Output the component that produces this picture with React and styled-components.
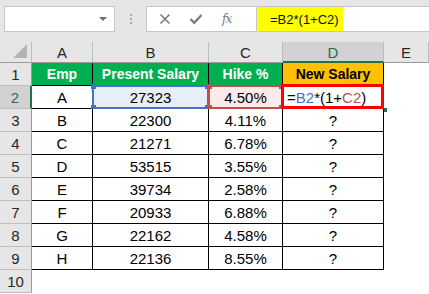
import React from "react";
import styled, { createGlobalStyle } from "styled-components";

const Global = createGlobalStyle`
  html, body { margin: 0; padding: 0; background: #fff; }
  body { font-family: "Liberation Sans", Arial, sans-serif; }
  * { box-sizing: border-box; }
`;

const Page = styled.div`
  width: 429px;
  height: 294px;
  overflow: hidden;
  background: #fff;
  display: flex;
  flex-direction: column;
`;

const Toolbar = styled.div`
  height: 42px;
  flex: none;
  background: #e6e6e6;
  display: flex;
  align-items: flex-start;
  padding: 6px 0 0 4px;
`;

const NameBox = styled.div`
  width: 111px;
  height: 26px;
  background: #fff;
  border: 1px solid #c6c6c6;
  display: flex;
  align-items: center;
  justify-content: flex-end;
  padding-right: 7px;
`;

const Caret = styled.div`
  width: 0;
  height: 0;
  border-left: 4px solid transparent;
  border-right: 4px solid transparent;
  border-top: 4px solid #6e6e6e;
`;

const Grip = styled.div`
  width: 31px;
  height: 26px;
  display: flex;
  flex-direction: column;
  align-items: center;
  justify-content: center;
  gap: 2px;
`;

const GripDot = styled.span`
  width: 2px;
  height: 2px;
  background: #a8a8a8;
`;

const FxButtons = styled.div`
  width: 111px;
  height: 26px;
  background: #fff;
  border: 1px solid #c6c6c6;
  display: flex;
  align-items: center;
  padding-left: 12px;
  gap: 18px;
`;

const Fx = styled.span`
  font-family: "DejaVu Serif", "Liberation Serif", serif;
  font-style: italic;
  font-size: 12px;
  color: #7a7a7a;
  letter-spacing: -1px;
  margin-left: 1px;
`;

const FormulaInput = styled.div`
  flex: 1;
  height: 26px;
  margin-left: 1px;
  background: #fff;
  border-top: 1px solid #c6c6c6;
  border-bottom: 1px solid #c6c6c6;
  display: flex;
  align-items: stretch;
`;

const Highlight = styled.div`
  background: #ffff00;
  width: 85px;
  font-size: 13px;
  color: #111;
  white-space: nowrap;
  display: flex;
  align-items: center;
  padding-left: 12px;
`;

const Grid = styled.div`
  display: grid;
  grid-template-columns: 32px 61px 116px 74px 101px 1fr;
  grid-template-rows: 21px repeat(10, 23px);
`;

const Corner = styled.div`
  background: #e6e6e6;
  border-right: 1px solid #bdbdbd;
  border-bottom: 1px solid #9b9b9b;
  position: relative;
  &::after {
    content: "";
    position: absolute;
    right: 4px;
    bottom: 4px;
    width: 0;
    height: 0;
    border-left: 14px solid transparent;
    border-bottom: 14px solid #b4b4b4;
  }
`;

const ColHead = styled.div`
  background: ${(p) => (p.$sel ? "#d2d2d2" : "#e6e6e6")};
  color: ${(p) => (p.$sel ? "#217346" : "#262626")};
  border-right: 1px solid #bdbdbd;
  border-bottom: ${(p) => (p.$sel ? "2px solid #217346" : "1px solid #9b9b9b")};
  font-size: 15px;
  display: flex;
  align-items: center;
  justify-content: center;
  padding-top: ${(p) => (p.$sel ? "1px" : "0")};
`;

const RowHead = styled.div`
  background: ${(p) => (p.$sel ? "#d2d2d2" : "#e6e6e6")};
  color: ${(p) => (p.$sel ? "#217346" : "#262626")};
  border-right: ${(p) => (p.$sel ? "2px solid #217346" : "1px solid #9b9b9b")};
  border-bottom: 1px solid #bdbdbd;
  font-size: 15px;
  display: flex;
  align-items: center;
  justify-content: center;
`;

const Cell = styled.div`
  position: relative;
  color: ${(p) => p.$fg || "#000"};
  display: flex;
  align-items: center;
  justify-content: ${(p) => (p.$left ? "flex-start" : "center")};
  padding-left: ${(p) => (p.$left ? "4px" : "0")};
  border-right: 1px solid #000;
  border-bottom: 1px solid #000;
  background: ${(p) => p.$bg || "#fff"};
  font-weight: ${(p) => (p.$bold ? 700 : 400)};
  font-size: ${(p) => (p.$bold ? "14px" : "15px")};
`;

const Empty = styled.div`
  background: #fff;
`;

const RefBox = styled.div`
  position: absolute;
  left: -1px;
  top: -1px;
  right: -1px;
  bottom: -1px;
  border: 2px solid ${(p) => p.$color};
  pointer-events: none;
`;

const Handle = styled.span`
  position: absolute;
  width: 5px;
  height: 5px;
  background: ${(p) => p.$color};
  ${(p) => (p.$top ? "top: -3px;" : "bottom: -3px;")}
  ${(p) => (p.$leftSide ? "left: -3px;" : "right: -3px;")}
`;

const ActiveBox = styled.div`
  position: absolute;
  left: -2px;
  top: -2px;
  right: -1px;
  bottom: -1px;
  border: 3px solid #ff0000;
  pointer-events: none;
`;

const FillHandle = styled.span`
  position: absolute;
  right: -4px;
  bottom: -4px;
  width: 4px;
  height: 4px;
  background: #217346;
`;

const Ref = styled.span`
  color: ${(p) => p.$color};
`;

const FormulaText = styled.span`
  font-size: 15px;
  white-space: nowrap;
`;

function RefFrame({ color }) {
  return (
    <RefBox $color={color}>
      <Handle $color={color} $top $leftSide />
      <Handle $color={color} $top />
      <Handle $color={color} $leftSide />
      <Handle $color={color} />
    </RefBox>
  );
}

const rows = [
  ["A", "27323", "4.50%"],
  ["B", "22300", "4.11%"],
  ["C", "21271", "6.78%"],
  ["D", "53515", "3.55%"],
  ["E", "39734", "2.58%"],
  ["F", "20933", "6.88%"],
  ["G", "22162", "4.58%"],
  ["H", "22136", "8.55%"],
];

const BLUE = "#4472c4";
const RED = "#c0504d";

export default function App() {
  return (
    <>
      <Global />
      <Page>
        <Toolbar>
          <NameBox>
            <Caret />
          </NameBox>
          <Grip>
            <GripDot />
            <GripDot />
            <GripDot />
          </Grip>
          <FxButtons>
            <svg width="12" height="12" viewBox="0 0 12 12">
              <path d="M1.5 1.5 L10.5 10.5 M10.5 1.5 L1.5 10.5" stroke="#7a7a7a" strokeWidth="1.5" fill="none" />
            </svg>
            <svg width="14" height="12" viewBox="0 0 14 12">
              <path d="M1.5 6 L5.2 9.8 L12.5 2" stroke="#7a7a7a" strokeWidth="2.2" fill="none" />
            </svg>
            <Fx>fx</Fx>
          </FxButtons>
          <FormulaInput>
            <Highlight>=B2*(1+C2)</Highlight>
          </FormulaInput>
        </Toolbar>
        <Grid>
          <Corner />
          <ColHead>A</ColHead>
          <ColHead>B</ColHead>
          <ColHead>C</ColHead>
          <ColHead $sel>D</ColHead>
          <ColHead>E</ColHead>

          <RowHead>1</RowHead>
          <Cell $bg="#00b050" $fg="#fff" $bold>Emp</Cell>
          <Cell $bg="#00b050" $fg="#fff" $bold>Present Salary</Cell>
          <Cell $bg="#00b050" $fg="#fff" $bold>Hike %</Cell>
          <Cell $bg="#ffc000" $bold>New Salary</Cell>
          <Empty />

          {rows.map((r, i) => {
            const first = i === 0;
            return (
              <React.Fragment key={r[0]}>
                <RowHead $sel={first}>{i + 2}</RowHead>
                <Cell>{r[0]}</Cell>
                <Cell $bg={first ? "#e8eef8" : undefined}>
                  {r[1]}
                  {first && <RefFrame color={BLUE} />}
                </Cell>
                <Cell $bg={first ? "#fbeaea" : undefined}>
                  {r[2]}
                  {first && <RefFrame color={RED} />}
                </Cell>
                {first ? (
                  <Cell $left>
                    <FormulaText>
                      =<Ref $color={BLUE}>B2</Ref>*(1+<Ref $color={RED}>C2</Ref>)
                    </FormulaText>
                    <ActiveBox />
                    <FillHandle />
                  </Cell>
                ) : (
                  <Cell>?</Cell>
                )}
                <Empty />
              </React.Fragment>
            );
          })}

          <RowHead>10</RowHead>
          <Empty />
          <Empty />
          <Empty />
          <Empty />
          <Empty />
        </Grid>
      </Page>
    </>
  );
}
